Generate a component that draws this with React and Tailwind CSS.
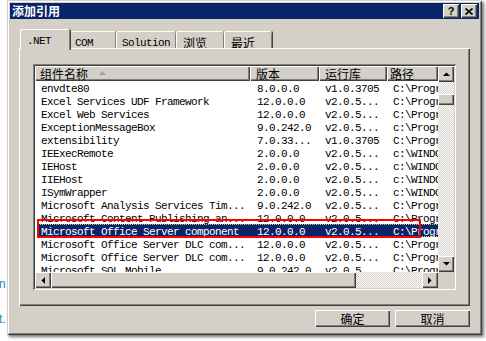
import React from "react";

const rows = [
  ["envdte80", "8.0.0.0", "v1.0.3705", "C:\\Progr"],
  ["Excel Services UDF Framework", "12.0.0.0", "v2.0.5...", "C:\\Progr"],
  ["Excel Web Services", "12.0.0.0", "v2.0.5...", "C:\\Progr"],
  ["ExceptionMessageBox", "9.0.242.0", "v2.0.5...", "c:\\Progr"],
  ["extensibility", "7.0.33...", "v1.0.3705", "C:\\Progr"],
  ["IEExecRemote", "2.0.0.0", "v2.0.5...", "c:\\WINDO"],
  ["IEHost", "2.0.0.0", "v2.0.5...", "c:\\WINDO"],
  ["IIEHost", "2.0.0.0", "v2.0.5...", "c:\\WINDO"],
  ["ISymWrapper", "2.0.0.0", "v2.0.5...", "c:\\WINDO"],
  ["Microsoft Analysis Services Tim...", "9.0.242.0", "v2.0.5...", "C:\\Progr"],
  ["Microsoft Content Publishing an...", "12.0.0.0", "v2.0.5...", "C:\\Progr"],
  ["Microsoft Office Server component", "12.0.0.0", "v2.0.5...", "C:\\Progr"],
  ["Microsoft Office Server DLC com...", "12.0.0.0", "v2.0.5...", "C:\\Progr"],
  ["Microsoft Office Server DLC com...", "12.0.0.0", "v2.0.5...", "C:\\Progr"],
  ["Microsoft SQL Mobile", "9.0.242.0", "v2.0.5...", "C:\\Progr"],
];

const raised =
  "bg-[#d4d0c8] shadow-[inset_1px_1px_#ffffff,inset_-1px_-1px_#404040,inset_-2px_-2px_#808080]";
const cjk = "font-['Noto_Sans_CJK_SC',sans-serif]";
const mono = "font-['Liberation_Mono',monospace]";
const dither =
  "bg-[image:repeating-conic-gradient(#d4d0c8_0%_25%,#ffffff_0%_50%)] bg-[length:2px_2px]";

function Arrow({ dir }) {
  const pts = {
    up: "0,4 7,4 3.5,0.5",
    down: "0,0 7,0 3.5,3.5",
    left: "4,0 4,7 0.5,3.5",
    right: "0,0 0,7 3.5,3.5",
  }[dir];
  const vert = dir === "up" || dir === "down";
  return (
    <svg width={vert ? 7 : 4} height={vert ? 4 : 7} viewBox={vert ? "0 0 7 4" : "0 0 4 7"}>
      <polygon points={pts} fill="#000" />
    </svg>
  );
}

function ScrollBtn({ dir }) {
  return (
    <div className={`w-[16px] h-[16px] shrink-0 flex items-center justify-center ${raised}`}>
      <Arrow dir={dir} />
    </div>
  );
}

function Tab({ label, w, pl, selected, isCjk }) {
  const font = isCjk ? cjk + " text-[12px]" : mono + " text-[11px] tracking-[-0.6px]";
  if (selected) {
    return (
      <div
        className={`relative z-10 h-[21px] -mb-[2px] ${w} ${pl} pt-[5px] bg-[#d4d0c8] rounded-tl-[2px] rounded-tr-[2px] border-l border-t border-white shadow-[inset_-1px_0_#808080,1px_0_#404040] leading-[12px] ${font} text-black`}
      >
        {label}
      </div>
    );
  }
  return (
    <div
      className={`h-[17px] ${w} ${pl} pt-[5px] bg-[#d4d0c8] rounded-tl-[2px] rounded-tr-[2px] border-l border-t border-white shadow-[inset_-1px_0_#808080,1px_0_#404040] ${font} leading-[12px] text-black`}
    >
      {label}
    </div>
  );
}

export default function App() {
  return (
    <div className="w-[486px] h-[341px] bg-white overflow-hidden flex">
      <div className="w-[7px] shrink-0 overflow-hidden text-[#2a88b0] text-[12px] font-['Liberation_Sans',sans-serif] leading-[12px]">
        <div className="h-[278px]" />
        <div className="-ml-[1px]">n</div>
        <div className="h-[23px]" />
        <div className="-ml-[1px]">t.</div>
      </div>

      <div className="w-[475px] h-[335px] shrink-0 bg-[#d4d0c8] p-[3px] flex flex-col shadow-[inset_1px_1px_#d4d0c8,inset_-1px_-1px_#404040,inset_2px_2px_#ffffff,inset_-2px_-2px_#808080,2px_2px_3px_rgba(0,0,0,0.55)]">
        {/* title bar */}
        <div className="h-[16px] bg-[#0a246a] flex items-center pl-[2px] pr-[2px]">
          <div className={`flex-1 text-white font-bold text-[12px] leading-[14px] ${cjk}`}>添加引用</div>
          <div className={`w-[16px] h-[14px] flex items-center justify-center ${raised}`}>
            <span className="text-[11px] font-bold leading-[11px] font-['Liberation_Sans',sans-serif] text-black">?</span>
          </div>
          <div className={`w-[16px] h-[14px] ml-[2px] flex items-center justify-center ${raised}`}>
            <svg width="8" height="7" viewBox="0 0 8 7">
              <path d="M0.5 0.5 L7.5 6.5 M7.5 0.5 L0.5 6.5" stroke="#000" strokeWidth="1.6" />
            </svg>
          </div>
        </div>

        {/* body */}
        <div className="flex-1 flex flex-col px-[9px] pt-[10px]">
          {/* tabs */}
          <div className="flex items-end h-[19px] pl-[1px]">
            <Tab label=".NET" w="w-[50px]" pl="pl-[6px]" selected />
            <Tab label="COM" w="w-[46px]" pl="pl-[4px]" />
            <Tab label="Solution" w="w-[60px]" pl="pl-[5px]" />
            <Tab label="浏览" w="w-[48px]" pl="pl-[6px]" isCjk />
            <Tab label="最近" w="w-[48px]" pl="pl-[6px]" isCjk />
          </div>

          {/* panel */}
          <div className="h-[258px] shadow-[inset_1px_1px_#ffffff,inset_-1px_-1px_#404040,inset_-2px_-2px_#808080] px-[14px] pt-[16px]">
            <div className="h-[226px] bg-white p-[2px] shadow-[inset_1px_1px_#808080,inset_-1px_-1px_#ffffff,inset_2px_2px_#404040,inset_-2px_-2px_#d4d0c8] flex">
              {/* content column */}
              <div className="flex-1 flex flex-col min-w-0">
                {/* header */}
                <div className={`h-[15px] flex shrink-0 text-[12px] leading-[13px] ${cjk} text-black`}>
                  <div className={`w-[215px] shrink-0 pl-[5px] flex items-center ${raised}`}>
                    <span>组件名称</span>
                    <svg className="ml-[11px] mb-[1px]" width="7" height="4" viewBox="0 0 7 4">
                      <polygon points="0,4 7,4 3.5,0" fill="#a0a0a0" />
                    </svg>
                  </div>
                  <div className={`w-[69px] shrink-0 pl-[6px] flex items-center ${raised}`}>版本</div>
                  <div className={`w-[68px] shrink-0 pl-[6px] flex items-center ${raised}`}>运行库</div>
                  <div className={`flex-1 pl-[3px] flex items-center ${raised}`}>路径</div>
                </div>
                {/* rows */}
                <div className={`flex-1 relative overflow-hidden text-[11px] tracking-[-0.6px] ${mono}`}>
                  {rows.map((r, i) => {
                    const sel = i === 11;
                    return (
                      <div key={i} className="h-[13px] flex pl-[3px] leading-[16px] whitespace-nowrap">
                        <div
                          className={`flex flex-1 ${sel ? "bg-[#0a246a] text-white outline-1 outline-dotted outline-[#c8c480] -outline-offset-1" : "text-black"}`}
                        >
                          <div className="w-[212px] shrink-0 pl-[3px] overflow-hidden">{r[0]}</div>
                          <div className="w-[69px] shrink-0 pl-[7px] overflow-hidden">{r[1]}</div>
                          <div className="w-[68px] shrink-0 pl-[6px] overflow-hidden">{r[2]}</div>
                          <div className="flex-1 pl-[6px] overflow-hidden">{r[3]}</div>
                        </div>
                      </div>
                    );
                  })}
                  <div className="absolute left-[2px] top-[138px] w-[384px] h-[19px] border-2 border-[#ff0000]" />
                </div>
                {/* h scrollbar */}
                <div className={`h-[16px] shrink-0 flex ${dither}`}>
                  <ScrollBtn dir="left" />
                  <div className={`w-[305px] h-[16px] shrink-0 ${raised}`} />
                  <div className="flex-1" />
                  <ScrollBtn dir="right" />
                </div>
              </div>
              {/* v scrollbar column */}
              <div className="w-[16px] shrink-0 flex flex-col">
                <div className={`flex-1 flex flex-col ${dither}`}>
                  <ScrollBtn dir="up" />
                  <div className="h-[12px]" />
                  <div className={`w-[16px] h-[11px] ${raised}`} />
                  <div className="flex-1" />
                  <ScrollBtn dir="down" />
                </div>
                <div className="h-[16px] bg-[#d4d0c8]" />
              </div>
            </div>
          </div>

          {/* buttons */}
          <div className="flex justify-end gap-[5px] mt-[4px] pr-[0px]">
            <div className={`w-[75px] h-[17px] flex items-center justify-center text-[12px] leading-[13px] ${cjk} ${raised}`}>确定</div>
            <div className={`w-[75px] h-[17px] flex items-center justify-center text-[12px] leading-[13px] ${cjk} ${raised}`}>取消</div>
          </div>
        </div>
      </div>
    </div>
  );
}
